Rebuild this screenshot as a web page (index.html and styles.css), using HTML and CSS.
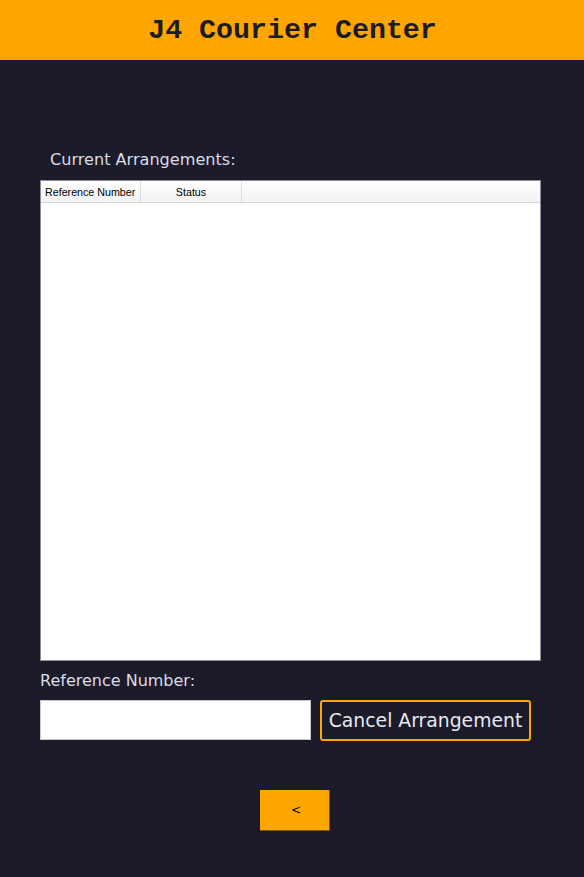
FILE: index.html
```html
<!DOCTYPE html>
<html>
<head>
<meta charset="utf-8">
<link rel="stylesheet" href="styles.css">
</head>
<body>
<header class="topbar"><h1 class="title">J4 Courier Center</h1></header>
<main class="content">
  <div class="section-label">Current Arrangements:</div>
  <div class="table-box">
    <div class="table-head">
      <div class="col col-ref">Reference Number</div>
      <div class="col col-status">Status</div>
      <div class="col col-rest"></div>
    </div>
  </div>
  <div class="field-label">Reference Number:</div>
  <div class="form-row">
    <input class="ref-input" type="text">
    <button class="cancel-btn">Cancel Arrangement</button>
  </div>
  <div class="back-row"><button class="back-btn">&lt;</button></div>
</main>
</body>
</html>
```
FILE: styles.css
```css
html, body { margin: 0; padding: 0; }
body {
  background: #1b1b29;
  width: 584px;
  height: 877px;
  overflow: hidden;
  font-family: "DejaVu Sans", Verdana, sans-serif;
}
.topbar {
  background: #ffa500;
  height: 60px;
  display: flex;
  align-items: center;
  justify-content: center;
}
.title {
  margin: 0;
  font-family: "Liberation Mono", "Courier New", monospace;
  font-weight: bold;
  font-size: 28.3px;
  color: #1b1b29;
  padding-left: 1px;
}
.content {
  padding: 0 43px 0 40px;
  display: flex;
  flex-direction: column;
}
.section-label {
  margin-top: 90px;
  padding-left: 10px;
  color: #dcdce6;
  font-size: 16.1px;
  line-height: 20px;
}
.table-box {
  margin-top: 10px;
  height: 479px;
  background: #fff;
  border: 1px solid #8b8b98;
}
.table-head {
  display: flex;
  height: 21px;
  border-bottom: 1px solid #d5d5dc;
  background: linear-gradient(#ffffff, #f1f2f5);
  font-family: "Liberation Sans", Tahoma, sans-serif;
  font-size: 10.7px;
  color: #000;
}
.col {
  display: flex;
  align-items: center;
  border-right: 1px solid #dcdce2;
  box-sizing: border-box;
  padding-top: 1px;
}
.col-ref { width: 100px; padding-left: 4px; }
.col-status { width: 101px; justify-content: center; }
.col-rest { border-right: none; flex: 1; }
.field-label {
  margin-top: 10px;
  color: #dcdce6;
  font-size: 16px;
  line-height: 20px;
}
.form-row {
  margin-top: 9px;
  display: flex;
  gap: 9px;
}
.ref-input {
  width: 271px;
  height: 40px;
  box-sizing: border-box;
  border: 1px solid #c8c8d0;
  background: #fff;
  margin: 0;
}
.cancel-btn {
  width: 211px;
  height: 41px;
  box-sizing: border-box;
  border: 2px solid #ffa500;
  border-radius: 3px;
  background: #1b1b29;
  color: #e8e8f0;
  font-family: "DejaVu Sans", Verdana, sans-serif;
  font-size: 18.8px;
  padding: 0;
  margin: 0;
}
.back-row {
  margin-top: 49px;
  display: flex;
  justify-content: center;
  padding-left: 8px;
}
.back-btn {
  width: 70px;
  height: 41px;
  box-sizing: border-box;
  background: #ffa500;
  border: none;
  border-right: 1px solid #7a5400;
  border-bottom: 1px solid #7a5400;
  color: #000;
  font-family: "DejaVu Sans", Verdana, sans-serif;
  font-size: 12px;
  padding: 0 0 0 4px;
  margin: 0;
}
```
